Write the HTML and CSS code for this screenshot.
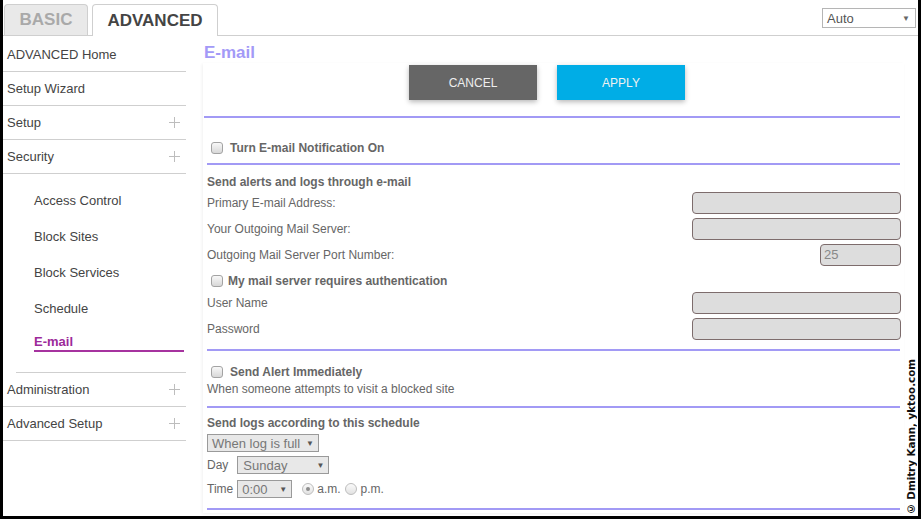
FILE: index.html
```html
<!DOCTYPE html>
<html lang="en">
<head>
<meta charset="utf-8">
<title>E-mail</title>
<link rel="stylesheet" href="styles.css">
</head>
<body>
<div class="frame">
  <header class="topbar">
    <div class="tabs">
      <div class="tab tab-basic">BASIC</div>
      <div class="tab tab-active">ADVANCED</div>
    </div>
    <div class="lang-select"><span>Auto</span><span class="arrow">&#9660;</span></div>
  </header>

  <div class="layout">
    <nav class="sidebar">
      <div class="nav-item">ADVANCED Home</div>
      <div class="nav-item">Setup Wizard</div>
      <div class="nav-item">Setup <svg class="plus" viewBox="0 0 11 11" width="11" height="11"><path d="M5.5 0V11M0 5.5H11" stroke="#bdbdbd" stroke-width="1"/></svg></div>
      <div class="nav-item">Security <svg class="plus" viewBox="0 0 11 11" width="11" height="11"><path d="M5.5 0V11M0 5.5H11" stroke="#bdbdbd" stroke-width="1"/></svg></div>
      <div class="submenu">
        <div class="sub-item">Access Control</div>
        <div class="sub-item">Block Sites</div>
        <div class="sub-item">Block Services</div>
        <div class="sub-item">Schedule</div>
        <div class="sub-item sub-active">E-mail</div>
      </div>
      <div class="nav-item">Administration <svg class="plus" viewBox="0 0 11 11" width="11" height="11"><path d="M5.5 0V11M0 5.5H11" stroke="#bdbdbd" stroke-width="1"/></svg></div>
      <div class="nav-item">Advanced Setup <svg class="plus" viewBox="0 0 11 11" width="11" height="11"><path d="M5.5 0V11M0 5.5H11" stroke="#bdbdbd" stroke-width="1"/></svg></div>
    </nav>

    <main class="main">
      <h1 class="title">E-mail</h1>
      <div class="panel">
        <div class="actions">
          <button class="btn btn-cancel">CANCEL</button>
          <button class="btn btn-apply">APPLY</button>
        </div>
        <div class="rule rule-first"></div>

        <label class="check-row check-main"><span class="checkbox"></span>Turn E-mail Notification On</label>
        <div class="rule"></div>

        <div class="heading h-alerts">Send alerts and logs through e-mail</div>
        <div class="field-row fr-first"><span>Primary E-mail Address:</span><span class="input"></span></div>
        <div class="field-row"><span>Your Outgoing Mail Server:</span><span class="input"></span></div>
        <div class="field-row"><span>Outgoing Mail Server Port Number:</span><span class="input input-short">25</span></div>

        <label class="check-row check-auth"><span class="checkbox"></span>My mail server requires authentication</label>
        <div class="field-row fr-user"><span>User Name</span><span class="input"></span></div>
        <div class="field-row"><span>Password</span><span class="input"></span></div>
        <div class="rule rule-3"></div>

        <label class="check-row check-alert"><span class="checkbox"></span>Send Alert Immediately</label>
        <div class="note">When someone attempts to visit a blocked site</div>
        <div class="rule rule-4"></div>

        <div class="heading h-logs">Send logs according to this schedule</div>
        <div class="sched-row sr-first">
          <span class="select sel-when"><span>When log is full</span><span class="arrow">&#9660;</span></span>
        </div>
        <div class="sched-row sr-day">
          <span class="lbl">Day</span>
          <span class="select sel-day"><span>Sunday</span><span class="arrow">&#9660;</span></span>
        </div>
        <div class="sched-row sr-time">
          <span class="lbl">Time</span>
          <span class="select sel-time"><span>0:00</span><span class="arrow">&#9660;</span></span>
          <span class="radio radio-on"></span><span class="rlabel">a.m.</span>
          <span class="radio"></span><span class="rlabel">p.m.</span>
        </div>
        <div class="rule rule-5"></div>
      </div>
    </main>
  </div>

  <div class="watermark">© Dmitry Kann, yktoo.com</div>
</div>
</body>
</html>
```

FILE: styles.css
```css
body {
  margin: 0;
  font-family: "Liberation Sans", Arial, sans-serif;
  background: #fff;
}

.frame {
  position: relative;
  width: 921px;
  height: 519px;
  box-sizing: border-box;
  border-left: 3px solid #000;
  border-right: 3px solid #000;
  border-bottom: 3px solid #000;
  background: #fff;
  overflow: hidden;
}

/* ---------- top bar ---------- */
.topbar {
  display: flex;
  justify-content: space-between;
  align-items: flex-start;
  height: 36px;
  box-sizing: border-box;
  border-bottom: 1px solid #cfcfcf;
}

.tabs {
  display: flex;
  align-items: flex-end;
  gap: 4px;
  height: 35px;
  padding-left: 1px;
}

.tab {
  box-sizing: border-box;
  height: 31px;
  border: 1px solid #cfcfcf;
  border-bottom: 0;
  border-radius: 4px 4px 0 0;
  font-size: 17px;
  font-weight: bold;
  display: flex;
  align-items: center;
  justify-content: center;
}

.tab-basic {
  width: 84px;
  background: #e9e9e9;
  color: #a9a9a9;
}

.tab-active {
  width: 126px;
  height: 32px;
  margin-bottom: -1px;
  background: #fff;
  color: #444;
}

.lang-select {
  box-sizing: border-box;
  width: 94px;
  height: 20px;
  margin-top: 8px;
  margin-right: 2px;
  border: 1px solid #b5b5b5;
  display: flex;
  align-items: center;
  justify-content: space-between;
  padding: 0 5px 0 4px;
  font-size: 13px;
  color: #555;
}

.lang-select .arrow {
  font-size: 8px;
  color: #666;
}

/* ---------- layout ---------- */
.layout {
  display: flex;
}

.sidebar {
  width: 183px;
  flex: none;
  padding-top: 2px;
  font-size: 13px;
  color: #444;
}

.nav-item {
  height: 33px;
  border-bottom: 1px solid #cfcfcf;
  padding: 0 6px 0 4px;
  display: flex;
  align-items: center;
  justify-content: space-between;
}

.submenu {
  padding: 8px 0 20px;
  margin-left: 13px;
  border-bottom: 1px solid #cfcfcf;
}

.sub-item {
  height: 36px;
  display: flex;
  align-items: center;
  padding-left: 18px;
}

.sub-active {
  height: 16px;
  padding-top: 8px;
  margin-left: 18px;
  margin-right: 2px;
  padding-left: 0;
  align-items: flex-start;
  line-height: 16px;
  color: #9c2a9a;
  font-weight: bold;
  border-bottom: 2px solid #a6339f;
}

/* ---------- main ---------- */
.main {
  flex: 1;
  padding: 7px 14px 0 17px;
}

.title {
  margin: 0 0 0 1px;
  font-size: 17px;
  line-height: 20px;
  color: #a39af7;
  font-weight: bold;
}

.panel {
  padding: 2px 4px 0 4px;
  box-shadow: -1px 1px 3px rgba(0, 0, 0, 0.06);
  font-size: 12px;
  color: #666;
  height: 450px;
  box-sizing: border-box;
}

.actions {
  display: flex;
  gap: 20px;
  padding-left: 202px;
}

.btn {
  width: 128px;
  height: 35px;
  border: 0;
  font-family: "Liberation Sans", Arial, sans-serif;
  font-size: 12px;
  color: #eee;
  box-shadow: 0 2px 5px rgba(0, 0, 0, 0.28);
}

.btn-cancel { background: #666; }
.btn-apply { background: #00ade6; color: #f1f1f1; }

.rule {
  height: 2px;
  background: #a29af5;
}

.rule-first { margin: 16px 0 0 -3px; }

.check-row {
  display: flex;
  align-items: center;
  line-height: 16px;
  font-weight: bold;
}

.checkbox {
  box-sizing: border-box;
  width: 12px;
  height: 12px;
  border: 1px solid #a3a3a3;
  border-radius: 3px;
  background: linear-gradient(#f8f8f8, #d8d8d8);
  margin-left: 4px;
  flex: none;
}

.check-main { padding: 22px 0 7px; }
.check-main .checkbox { margin-right: 7px; }

.heading {
  font-weight: bold;
  line-height: 16px;
}

.h-alerts { margin-top: 9px; }

.field-row {
  display: flex;
  align-items: center;
  justify-content: space-between;
  height: 22px;
  margin-top: 4px;
  padding-right: 3px;
  margin-right: -4px;
}

.fr-first { margin-top: 2px; }

.input {
  box-sizing: border-box;
  width: 209px;
  height: 22px;
  border: 1px solid #7d6c6c;
  border-radius: 4px;
  background: #dddddd;
  font-size: 13px;
  color: #888;
  padding-left: 3px;
  line-height: 20px;
}

.input-short { width: 81px; }

.check-auth { margin-top: 7px; }
.check-auth .checkbox { margin-right: 5px; }

.fr-user { margin-top: 3px; }

.rule-3 { margin-top: 9px; }

.check-alert { margin-top: 13px; }
.check-alert .checkbox { margin-right: 7px; }

.note {
  line-height: 16px;
  margin-top: 1px;
}

.rule-4 { margin-top: 9px; }

.h-logs { margin-top: 7px; }

.sched-row {
  display: flex;
  align-items: center;
  height: 18px;
}

.sr-first { margin-top: 3px; }
.sr-day { margin-top: 4px; }
.sr-time { margin-top: 6px; }

.lbl { margin-right: 9px; }
.sr-time .lbl { margin-right: 4px; }

.select {
  box-sizing: border-box;
  height: 18px;
  border: 1px solid #9a9a9a;
  background: #e8e8e8;
  display: flex;
  align-items: center;
  justify-content: space-between;
  padding: 0 4px 0 4px;
  font-size: 13px;
  color: #777;
}

.select .arrow {
  font-size: 8px;
  color: #555;
}

.sel-when { width: 112px; }
.sel-day { width: 92px; padding-left: 5px; }
.sel-time { width: 55px; }

.radio {
  box-sizing: border-box;
  width: 12px;
  height: 12px;
  border-radius: 50%;
  border: 1px solid #bdbdbd;
  background: linear-gradient(#fafafa, #e2e2e2);
  margin-left: 10px;
  margin-right: 3px;
  position: relative;
}

.radio + .rlabel + .radio { margin-left: 4px; margin-right: 4px; }

.radio-on::after {
  content: "";
  position: absolute;
  left: 3px;
  top: 3px;
  width: 4px;
  height: 4px;
  border-radius: 50%;
  background: #8c8c8c;
}

.rlabel { font-size: 12px; }

.rule-5 { margin-top: 10px; }

/* ---------- watermark ---------- */
.watermark {
  position: absolute;
  right: 1px;
  bottom: 1px;
  writing-mode: vertical-rl;
  transform: rotate(180deg);
  font-family: "DejaVu Sans", sans-serif;
  font-weight: bold;
  font-size: 10.3px;
  color: #111;
}
```
